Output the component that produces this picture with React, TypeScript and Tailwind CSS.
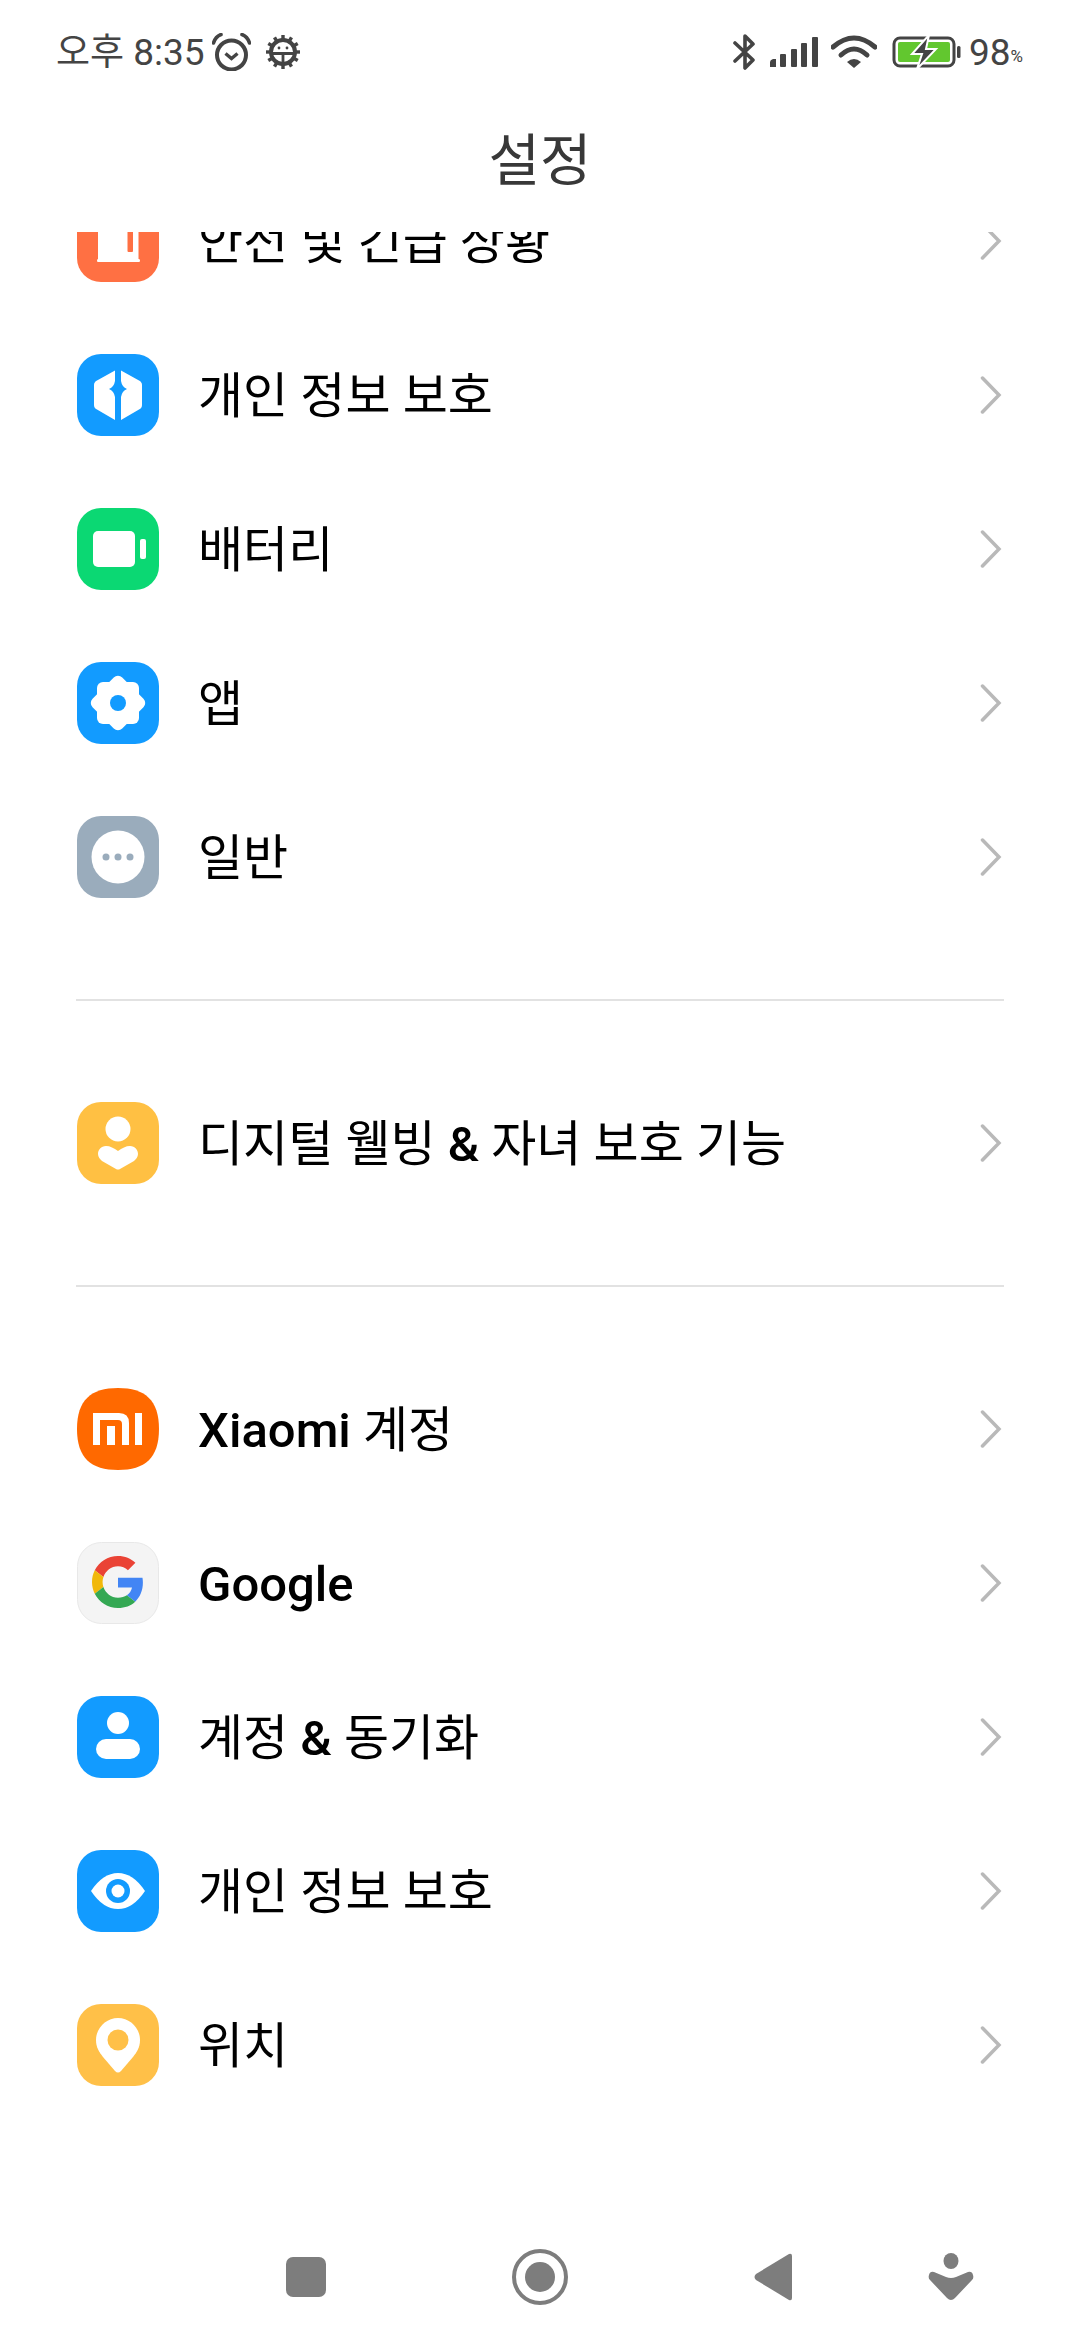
import * as React from "react";

function IconBox({ bg, children }: { bg: string; children: React.ReactNode }) {
  return (
    <svg viewBox="0 0 82 82" className="h-[82px] w-[82px] shrink-0">
      <rect x="0" y="0" width="82" height="82" rx="24" fill={bg} />
      {children}
    </svg>
  );
}

const Safety = () => (
  <IconBox bg="#ff7043">
    <path d="M21 -10H61.5V59H62Q63 59 63 60.5Q63 62 62 62H21Q20 62 20 60.5Q20 59 21 59Z" fill="#fff" />
    <rect x="50.5" y="20" width="5.5" height="32" rx="1" fill="#ff7043" />
  </IconBox>
);
const Shield = () => (
  <IconBox bg="#129bff">
    <path d="M38 16.5L20 26.5Q17 28 17 31V51Q17 54 20 55.5L38 66V43Q37 37 32 35Q37 33 38 27Z" fill="#fff" />
    <path d="M44 16.5L62 26.5Q65 28 65 31V51Q65 54 62 55.5L44 66V43Q45 37 50 35Q45 33 44 27Z" fill="#fff" />
  </IconBox>
);
const Battery = () => (
  <IconBox bg="#0bd873">
    <rect x="16" y="23" width="42" height="36" rx="5" fill="#fff" />
    <rect x="63" y="31" width="6" height="20" rx="2" fill="#fff" />
  </IconBox>
);
const Apps = () => (
  <IconBox bg="#129bff">
    <rect x="20" y="20" width="42" height="42" rx="6" fill="#fff" />
    <rect x="20" y="20" width="42" height="42" rx="6" fill="#fff" transform="rotate(45 41 41)" />
    <circle cx="41" cy="41" r="8" fill="#129bff" />
  </IconBox>
);
const General = () => (
  <IconBox bg="#9aacbc">
    <circle cx="41" cy="41" r="26.5" fill="#fff" />
    <circle cx="29" cy="41" r="3.5" fill="#9aacbc" />
    <circle cx="41" cy="41" r="3.5" fill="#9aacbc" />
    <circle cx="53" cy="41" r="3.5" fill="#9aacbc" />
  </IconBox>
);
const Wellbeing = () => (
  <IconBox bg="#ffc043">
    <circle cx="41" cy="27" r="12.5" fill="#fff" />
    <path d="M41 49C37 46 33 44 29 44C24 44 21 48 21 52C21 55 23 57 25 59L39 67Q41 68 43 67L57 59C59 57 61 55 61 52C61 48 58 44 53 44C49 44 45 46 41 49Z" fill="#fff" />
  </IconBox>
);
const Xiaomi = () => (
  <svg viewBox="0 0 82 82" className="h-[82px] w-[82px] shrink-0">
    <path d="M41 0C68 0 82 12 82 41C82 70 68 82 41 82C14 82 0 70 0 41C0 12 14 0 41 0Z" fill="#ff6900" />
    <path d="M16 25H42Q52 25 52 35V57H45V36Q45 32 41 32H23V57H16Z" fill="#fff" />
    <rect x="30" y="38" width="8" height="19" fill="#fff" />
    <rect x="58" y="25" width="7" height="32" fill="#fff" />
  </svg>
);
const GoogleIcon = () => (
  <svg viewBox="0 0 82 82" className="h-[82px] w-[82px] shrink-0">
    <rect x="0.5" y="0.5" width="81" height="81" rx="24" fill="#f4f4f4" stroke="#e8e8e8" />
    <g transform="translate(15 14) scale(1.0833)">
      <path fill="#EA4335" d="M24 9.5c3.54 0 6.71 1.22 9.21 3.6l6.85-6.85C35.9 2.38 30.47 0 24 0 14.62 0 6.51 5.38 2.56 13.22l7.98 6.19C12.43 13.72 17.74 9.5 24 9.5z" />
      <path fill="#4285F4" d="M46.98 24.55c0-1.57-.15-3.09-.38-4.55H24v9.02h12.94c-.58 2.96-2.26 5.48-4.78 7.18l7.73 6c4.51-4.18 7.09-10.36 7.09-17.65z" />
      <path fill="#F1B80A" d="M10.53 28.59c-.48-1.45-.76-2.99-.76-4.59s.27-3.14.76-4.59l-7.98-6.19C.92 16.46 0 20.12 0 24c0 3.88.92 7.54 2.56 10.78l7.97-6.19z" />
      <path fill="#34A853" d="M24 48c6.48 0 11.93-2.13 15.89-5.81l-7.73-6c-2.15 1.45-4.92 2.3-8.16 2.3-6.26 0-11.57-4.22-13.47-9.91l-7.98 6.19C6.51 42.62 14.62 48 24 48z" />
    </g>
  </svg>
);
const Account = () => (
  <IconBox bg="#129bff">
    <circle cx="41" cy="27" r="11" fill="#fff" />
    <rect x="19" y="43" width="44" height="20" rx="10" fill="#fff" />
  </IconBox>
);
const Eye = () => (
  <IconBox bg="#129bff">
    <path d="M14 41Q26 23 41 23Q56 23 68 41Q56 59 41 59Q26 59 14 41Z" fill="#fff" />
    <circle cx="41" cy="41" r="12" fill="#129bff" />
    <circle cx="41" cy="41" r="6.5" fill="#fff" />
  </IconBox>
);
const Pin = () => (
  <IconBox bg="#ffc048">
    <path d="M41 14C29 14 19 24 19 36C19 43 22 48 26 53L38 67Q41 70 44 67L56 53C60 48 63 43 63 36C63 24 53 14 41 14Z" fill="#fff" />
    <circle cx="41" cy="36" r="10.5" fill="#ffc048" />
  </IconBox>
);

const Chevron = () => (
  <svg viewBox="0 0 24 38" className="h-[38px] w-[24px] shrink-0">
    <path d="M3.5 2L20 19L3.5 36" fill="none" stroke="#b9b9b9" strokeWidth="3.5" strokeLinecap="round" />
  </svg>
);

function Row({ icon, children }: { icon: React.ReactNode; children: React.ReactNode }) {
  return (
    <div className="flex h-[154px] items-center pl-[77px] pr-[77px]">
      {icon}
      <div className="ml-[39px] mt-[3px] flex-1 text-[49px] leading-none text-black">{children}</div>
      <Chevron />
    </div>
  );
}

const Divider = () => <div className="mx-[76px] my-[65px] h-[2px] bg-[#e2e2e2]" />;

const gearTeeth = [0, 30, 60, 90, 120, 150, 180, 210, 240, 270, 300, 330];

function StatusBar() {
  return (
    <div className="flex h-[104px] items-center justify-between pl-[56px] pr-[57px] text-[37px] leading-none text-[#444444]">
      <div className="flex items-center">
        <span className="w-[148px] whitespace-nowrap">오후 8:35</span>
        <svg viewBox="0 0 39 38" className="ml-[8px] h-[38px] w-[39px]">
          <circle cx="19.5" cy="22" r="14.5" fill="none" stroke="#444" strokeWidth="4" />
          <path d="M13.5 20.5L19.5 25.5L25.5 20.5" fill="none" stroke="#444" strokeWidth="3.4" />
          <path d="M1.5 10Q3.5 3.5 9 1.5M37.5 10Q35.5 3.5 30 1.5" fill="none" stroke="#444" strokeWidth="3.6" strokeLinecap="round" />
        </svg>
        <svg viewBox="0 0 34 34" className="ml-[15px] h-[34px] w-[34px]">
          <circle cx="17" cy="17" r="12" fill="none" stroke="#444" strokeWidth="4" />
          {gearTeeth.map((a) => (
            <rect key={a} x="15.3" y="0" width="3.4" height="5" fill="#444" transform={`rotate(${a} 17 17)`} />
          ))}
          <path d="M6 18.5H28M17 18.5V28" stroke="#444" strokeWidth="2.8" />
          <circle cx="13" cy="13" r="1.4" fill="#444" />
          <circle cx="21" cy="13" r="1.4" fill="#444" />
        </svg>
      </div>
      <div className="flex items-center">
        <svg viewBox="0 0 24 38" className="h-[38px] w-[24px]">
          <path d="M2 10L20 27L12 35V3L20 11L2 28" fill="none" stroke="#444" strokeWidth="3.6" strokeLinecap="round" strokeLinejoin="round" />
        </svg>
        <svg viewBox="0 0 48 30" className="ml-[13px] h-[30px] w-[48px]">
          <path d="M0 25Q0 23 3 22H6V30H0Z" fill="#444" />
          <rect x="10" y="17" width="6" height="13" rx="1" fill="#444" />
          <rect x="21" y="12" width="6" height="18" rx="1" fill="#444" />
          <rect x="31" y="6" width="6" height="24" rx="1" fill="#444" />
          <rect x="42" y="0" width="6" height="30" rx="1" fill="#444" />
        </svg>
        <svg viewBox="0 0 46 34" className="ml-[13px] h-[34px] w-[46px]">
          <path d="M2 12Q23 -6 44 12" fill="none" stroke="#444" strokeWidth="5" strokeLinecap="round" />
          <path d="M10 20Q23 8 36 20" fill="none" stroke="#444" strokeWidth="5" strokeLinecap="round" />
          <path d="M16 27Q23 21 30 27L23 33Z" fill="#444" />
        </svg>
        <svg viewBox="0 0 70 32" className="ml-[15px] h-[32px] w-[70px]">
          <rect x="2" y="2" width="60" height="28" rx="6" fill="none" stroke="#444" strokeWidth="3" />
          <rect x="6" y="6" width="52" height="20" rx="2" fill="#62c72f" />
          <path d="M37 -1L20 18H30L25 33L44 13H34Z" fill="#444" stroke="#fff" strokeWidth="2" />
          <rect x="65" y="10" width="3.5" height="12" rx="1.5" fill="#444" />
        </svg>
        <span className="ml-[7px]">98</span>
        <span className="mt-[8px] text-[17px]">%</span>
      </div>
    </div>
  );
}

function NavBar() {
  return (
    <div className="flex h-[126px] items-center bg-white">
      <svg viewBox="0 0 40 40" className="ml-[286px] h-[40px] w-[40px]">
        <rect width="40" height="40" rx="7" fill="#7d7d7d" />
      </svg>
      <svg viewBox="0 0 56 56" className="ml-[186px] h-[56px] w-[56px]">
        <circle cx="28" cy="28" r="26" fill="none" stroke="#7d7d7d" strokeWidth="4" />
        <circle cx="28" cy="28" r="15" fill="#7d7d7d" />
      </svg>
      <svg viewBox="0 0 38 48" className="ml-[186px] h-[48px] w-[38px]">
        <path d="M35 1Q38 0 38 3V45Q38 48 35 47L2 27Q-1 24 2 21Z" fill="#7d7d7d" />
      </svg>
      <svg viewBox="0 0 46 48" className="ml-[136px] h-[48px] w-[46px]">
        <ellipse cx="23" cy="8" rx="7.5" ry="8" fill="#7d7d7d" />
        <path d="M6 19L18 24Q23 26 28 24L40 19Q44 18 45 22Q46 25 44 27L27 45Q23 49 19 45L2 27Q0 25 1 22Q2 18 6 19Z" fill="#7d7d7d" />
      </svg>
    </div>
  );
}

export default function App() {
  return (
    <div className="flex h-[2340px] w-[1080px] flex-col overflow-hidden bg-white [font-family:Roboto,'Noto_Sans_CJK_KR',sans-serif]">
      <StatusBar />
      <div className="flex h-[128px] shrink-0 items-start justify-center pt-[29px] text-[56px] leading-none text-[#383838]">설정</div>
      <div className="min-h-0 flex-1 overflow-hidden">
        <div className="-mt-[68px]">
          <Row icon={<Safety />}>안전 및 긴급 상황</Row>
          <Row icon={<Shield />}>개인 정보 보호</Row>
          <Row icon={<Battery />}>배터리</Row>
          <Row icon={<Apps />}>앱</Row>
          <Row icon={<General />}>일반</Row>
          <Divider />
          <Row icon={<Wellbeing />}>
            디지털 웰빙 <span className="font-medium">&amp;</span> 자녀 보호 기능
          </Row>
          <Divider />
          <Row icon={<Xiaomi />}>
            <span className="font-medium">Xiaomi</span> 계정
          </Row>
          <Row icon={<GoogleIcon />}>
            <span className="font-medium">Google</span>
          </Row>
          <Row icon={<Account />}>
            계정 <span className="font-medium">&amp;</span> 동기화
          </Row>
          <Row icon={<Eye />}>개인 정보 보호</Row>
          <Row icon={<Pin />}>위치</Row>
        </div>
      </div>
      <NavBar />
    </div>
  );
}
